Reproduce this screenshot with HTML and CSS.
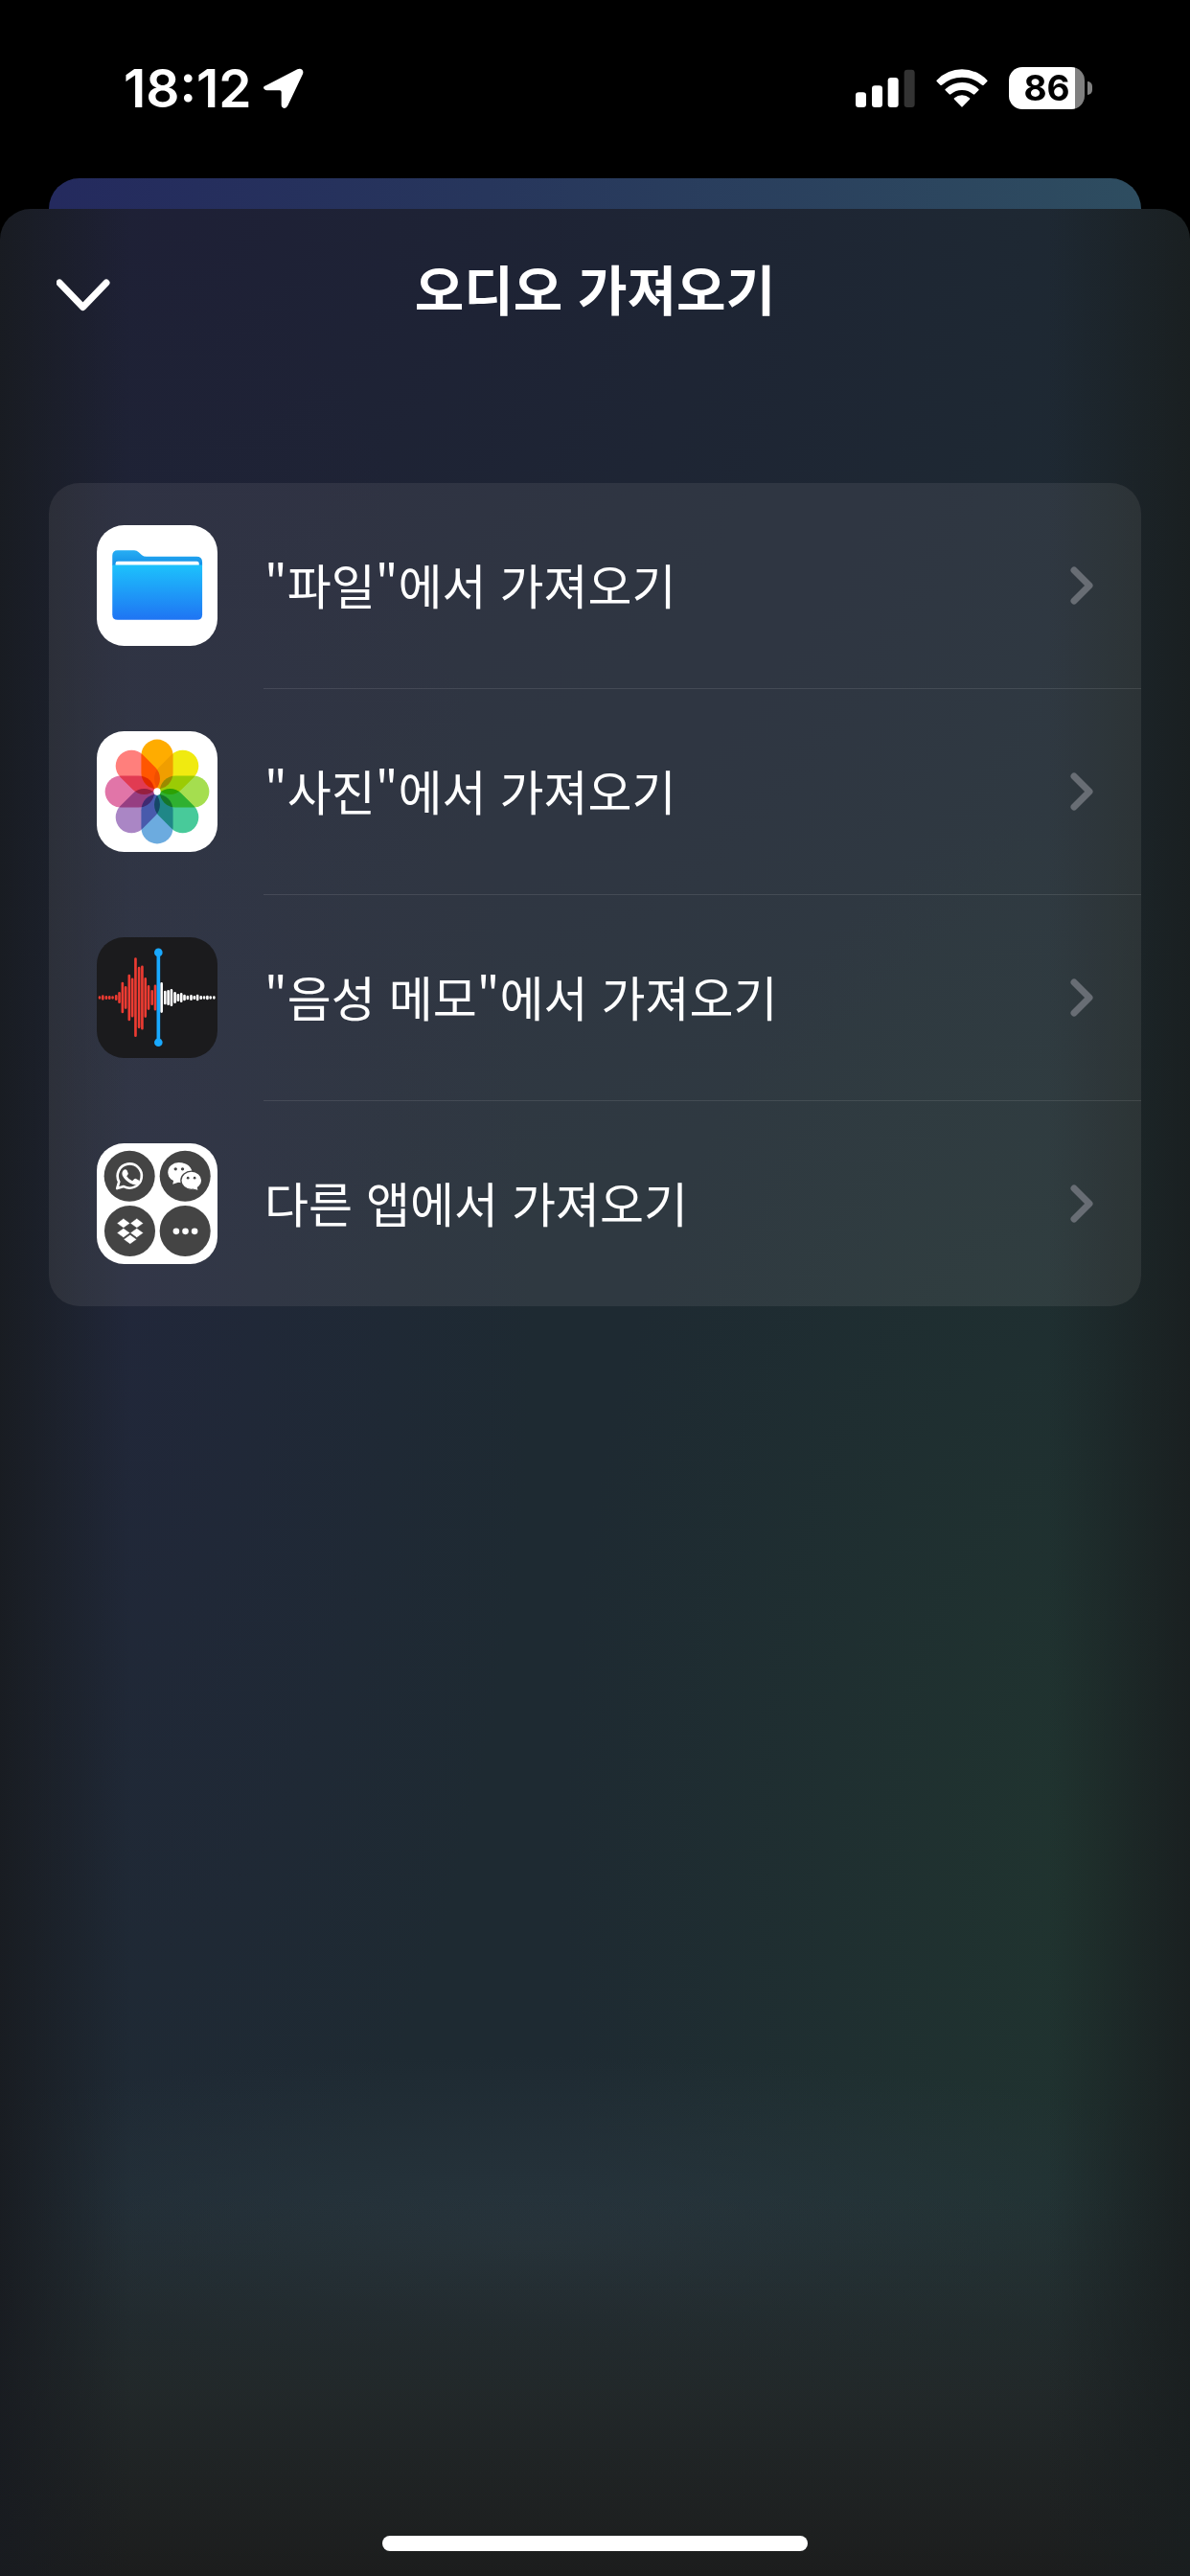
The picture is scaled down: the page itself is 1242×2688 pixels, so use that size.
FILE: index.html
```html
<!DOCTYPE html>
<html lang="ko">
<head>
<meta charset="utf-8">
<meta name="viewport" content="width=device-width, initial-scale=1">
<title>오디오 가져오기</title>
<link rel="stylesheet" href="styles.css">
</head>
<body>
<div class="screen">
  <div class="status-bar">
    <div class="status-left">
      <span class="clock">18:12</span>
      <svg class="location" viewBox="525 95 126 126" aria-hidden="true"><path d="M534 149 631 99Q640 95 646 100Q651 105 648 114L601 213Q597 221 590 221Q581 220 581 210V170Q581 165 576 165H536Q526 164 525 156Q525 152 534 149Z" fill="#fff"/></svg>
    </div>
    <div class="status-right">
      <svg class="signal" viewBox="93 95 186 120" aria-hidden="true">
        <g fill="#fff"><rect x="93" y="168" width="33" height="47" rx="10"/><rect x="144" y="147" width="33" height="68" rx="10"/><rect x="194" y="122" width="33" height="93" rx="10"/></g>
        <rect x="245" y="97" width="33" height="118" rx="10" fill="#333"/>
      </svg>
      <svg class="wifi" viewBox="346 95 162 120" aria-hidden="true">
        <g fill="#fff"><path d="M348 130Q382 96 427 96Q472 96 506 130Q508 132 506 134L495 145Q492 147 490 145Q463 121 427 121Q391 121 364 145Q362 147 359 145L348 134Q346 132 348 130Z"/><path d="M375 158Q398 137 427 137Q456 137 479 158Q481 160 479 162L467 174Q465 176 462 174Q447 161 427 161Q407 161 392 174Q389 176 387 174L375 162Q373 160 375 158Z"/><path d="M403 186Q414 177 427 177Q440 177 451 186Q453 188 451 190L429 213Q427 215 425 213L403 190Q401 188 403 186Z"/></g>
      </svg>
      <div class="battery"><span class="battery-body">86</span><span class="battery-nub"></span></div>
    </div>
  </div>

  <div class="back-sheet"></div>

  <main class="sheet">
    <header class="sheet-header">
      <button class="close" type="button" aria-label="닫기">
        <svg viewBox="0 0 56 34" aria-hidden="true"><path d="M3 4 27.500 29.500 52 4" fill="none" stroke="#fff" stroke-width="7" stroke-linecap="round" stroke-linejoin="round"/></svg>
      </button>
      <h1 class="title">오디오 가져오기</h1>
    </header>

    <ul class="list">
      <li><a class="row" href="#files">
        <svg class="app-icon" viewBox="33 57 380 380" aria-hidden="true">
          <defs>
            <linearGradient id="folder-front" x1="0" y1="0" x2="0" y2="1"><stop offset="0" stop-color="#1dc2fc"/><stop offset="1" stop-color="#1f74f3"/></linearGradient>
            <linearGradient id="folder-back" x1="0" y1="0" x2="0" y2="1"><stop offset="0" stop-color="#27aef4"/><stop offset="1" stop-color="#1590e6"/></linearGradient>
          </defs>
          <rect x="33" y="57" width="380" height="380" rx="86" fill="#fff"/>
          <path d="M82 184V153Q82 136 99 136H151Q159 136 165 142L175 151Q181 156 189 156H347Q365 156 365 174V184Z" fill="url(#folder-back)"/>
          <path d="M92 184V178Q92 171 99 171H348Q355 171 355 178V184Z" fill="#fff"/>
          <path d="M82 182H365V338Q365 355 348 355H99Q82 355 82 338Z" fill="url(#folder-front)"/>
        </svg>
        <span class="label">"파일"에서 가져오기</span>
        <svg class="chevron" viewBox="0 0 24 40" aria-hidden="true"><path d="M4 4 20 20 4 36"/></svg>
      </a></li>
      <li><a class="row" href="#photos">
        <svg class="app-icon" viewBox="-190 -190 380 380" aria-hidden="true">
          <rect x="-190" y="-190" width="380" height="380" rx="86" fill="#fff"/>
          <g class="petals">
            <rect x="-50" y="-164" width="100" height="156" rx="50" fill="#ffac00"/>
            <rect x="-50" y="-164" width="100" height="156" rx="50" fill="#f0ea10" transform="rotate(45)"/>
            <rect x="-50" y="-164" width="100" height="156" rx="50" fill="#a5de4f" transform="rotate(90)"/>
            <rect x="-50" y="-164" width="100" height="156" rx="50" fill="#48ca9a" transform="rotate(135)"/>
            <rect x="-50" y="-164" width="100" height="156" rx="50" fill="#6cabdf" transform="rotate(180)"/>
            <rect x="-50" y="-164" width="100" height="156" rx="50" fill="#aa86c5" transform="rotate(225)"/>
            <rect x="-50" y="-164" width="100" height="156" rx="50" fill="#e175a8" transform="rotate(270)"/>
            <rect x="-50" y="-164" width="100" height="156" rx="50" fill="#ff7f7c" transform="rotate(315)"/>
          </g>
          <circle r="11" fill="#fff"/>
        </svg>
        <span class="label">"사진"에서 가져오기</span>
        <svg class="chevron" viewBox="0 0 24 40" aria-hidden="true"><path d="M4 4 20 20 4 36"/></svg>
      </a></li>
      <li><a class="row" href="#voice-memos">
        <svg class="app-icon" viewBox="34 39 380 380" aria-hidden="true">
          <rect x="34" y="39" width="380" height="380" rx="86" fill="#1b1b1d"/>
          <g fill="none" stroke-width="8" stroke-linecap="round">
            <path stroke="#ec3b32" d="M43 228v2M53 225v8M64 227v4M74 227v4M84 228v2M95 224v10M105 215v28M115 184v90M125 197v64M136 160v138M146 171v116M156 107v242M167 136v186M177 132v194M187 170v118M197 194v70M208 209v40M218 192v74"/>
            <path stroke="#fff" d="M238 185v88M249 211v36M259 209v40M269 206v46M280 215v28M290 221v16M300 218v22M310 223v12M320 226v6M331 224v10M341 227v4M351 223v12M362 227v4M372 228v2M382 226v6M392 228v2M403 228v2"/>
          </g>
          <path d="M228 87V370" stroke="#19a9ff" stroke-width="11"/>
          <circle cx="228" cy="87" r="13" fill="#19a9ff"/><circle cx="228" cy="370" r="13" fill="#19a9ff"/>
        </svg>
        <span class="label">"음성 메모"에서 가져오기</span>
        <svg class="chevron" viewBox="0 0 24 40" aria-hidden="true"><path d="M4 4 20 20 4 36"/></svg>
      </a></li>
      <li><a class="row" href="#other-apps">
        <svg class="app-icon" viewBox="33 37 380 380" aria-hidden="true">
          <rect x="33" y="37" width="380" height="380" rx="86" fill="#fff"/>
          <g fill="#444"><circle cx="136" cy="140" r="80"/><circle cx="311" cy="140" r="80"/><circle cx="137" cy="313" r="80"/><circle cx="311" cy="313" r="80"/></g>
          <path d="M97 179 103 158A38 38 0 1 1 118 173Z" fill="none" stroke="#fff" stroke-width="8" stroke-linejoin="round"/>
          <path d="M118 121Q124 117 128 122L132 132Q132 135 127 140Q134 151 145 155L151 149Q154 147 158 149L166 154Q168 162 160 166Q151 170 137 162Q121 153 114 139Q110 129 118 121Z" fill="#fff"/>
          <path d="M272 166 275 152A34 31 0 1 1 290 160Z" fill="#fff"/>
          <ellipse cx="291" cy="128" rx="34" ry="31" fill="#fff"/>
          <circle cx="281" cy="118" r="5" fill="#444"/><circle cx="303" cy="118" r="5" fill="#444"/>
          <g stroke="#444" stroke-width="4"><ellipse cx="331" cy="154" rx="33" ry="29" fill="#fff"/></g>
          <path d="M336 180 351 184 348 172Z" fill="#fff"/>
          <circle cx="320" cy="146" r="4" fill="#444"/><circle cx="341" cy="146" r="4" fill="#444"/>
          <path transform="translate(96 266) scale(3.500 4)" fill="#fff" stroke="#444" stroke-width=".5" d="M6 1.807 0 5.629l6 3.822 6-3.822zM18 1.807l-6 3.822 6 3.822 6-3.822zM0 13.274l6 3.822 6-3.822-6-3.822zM18 9.452l-6 3.822 6 3.822 6-3.822zM6 18.371l6 3.822 6-3.822-6-3.822z"/>
          <g fill="#fff"><circle cx="283" cy="314" r="10"/><circle cx="312" cy="314" r="10"/><circle cx="341" cy="314" r="10"/></g>
        </svg>
        <span class="label">다른 앱에서 가져오기</span>
        <svg class="chevron" viewBox="0 0 24 40" aria-hidden="true"><path d="M4 4 20 20 4 36"/></svg>
      </a></li>
    </ul>

    <div class="home-indicator"></div>
  </main>
</div>
</body>
</html>
```
FILE: styles.css
```css
* { box-sizing: border-box; }

body {
  margin: 0;
  background: #000;
  color: #fff;
  font-family: Inter, "Noto Sans CJK KR", sans-serif;
}

svg { display: block; flex: none; }

.screen {
  display: flex;
  flex-direction: column;
  min-height: 100vh;
}

/* Status bar */
.status-bar {
  display: flex;
  justify-content: space-between;
  align-items: center;
  height: 186px;
  padding: 0 102px 2px 129px;
}

.status-left,
.status-right {
  display: flex;
  align-items: center;
}

.status-left { gap: 12px; }
.status-right { gap: 22px; }

.clock {
  font-size: 55px;
  font-weight: 600;
  line-height: 64px;
}

.location { width: 42px; height: 42px; }
.signal { width: 62px; height: 40px; }
.wifi { width: 54px; height: 40px; }

.battery {
  display: flex;
  align-items: center;
  gap: 3px;
}

.battery-body {
  width: 79px;
  height: 44px;
  border-radius: 14px;
  background: linear-gradient(90deg, #fff 69px, #808080 69px);
  color: #000;
  font-size: 37px;
  font-weight: 700;
  line-height: 44px;
  text-align: center;
}

.battery-nub {
  width: 5px;
  height: 14px;
  border-radius: 0 6px 6px 0;
  background: #808080;
}

/* Sheets */
.back-sheet {
  height: 32px;
  margin: 0 51px;
  border-radius: 32px 32px 0 0;
  background: linear-gradient(90deg, #242a5e, #27365c 40%, #2e4d60);
}

.sheet {
  flex: 1;
  display: flex;
  flex-direction: column;
  border-radius: 32px 32px 0 0;
  background:
    linear-gradient(90deg, rgba(24, 27, 32, .9), rgba(24, 27, 34, 0) 11%, rgba(25, 28, 30, 0) 88%, rgba(25, 30, 31, .9)),
    linear-gradient(180deg, rgba(28, 29, 29, 0) 84%, rgba(34, 40, 41, .9) 92%, #1c1d1d),
    radial-gradient(ellipse 70% 8% at 45% 86%, rgba(44, 58, 66, .7), rgba(44, 58, 66, 0)),
    radial-gradient(ellipse 45% 45% at 92% 70%, #20342f, rgba(32, 52, 47, 0)),
    radial-gradient(ellipse 90% 45% at 15% 0%, #1e2036, rgba(30, 32, 54, 0)),
    radial-gradient(ellipse 35% 45% at 10% 45%, #21273a, rgba(33, 39, 58, 0)),
    #1e2a32;
}

.sheet-header {
  display: grid;
  grid-template-columns: 1fr auto 1fr;
  align-items: center;
  height: 170px;
  padding: 0 55px;
}

.close {
  justify-self: start;
  padding: 10px 4px 0;
  border: 0;
  background: none;
}

.close svg { width: 56px; height: 34px; }

.title {
  margin: 0;
  padding-bottom: 6px;
  font-family: "Noto Sans CJK KR", sans-serif;
  font-size: 56px;
  font-weight: 700;
  line-height: 80px;
}

/* Source list */
.list {
  margin: 116px 51px 80px;
  padding: 0;
  list-style: none;
  border-radius: 32px;
  background: rgba(255, 245, 240, .08);
}

.row {
  display: flex;
  align-items: center;
  height: 214px;
  padding: 0 50px;
  color: inherit;
  text-decoration: none;
}

.list li + li::before {
  content: "";
  display: block;
  height: 1px;
  margin-left: 224px;
  background: rgba(255, 255, 255, .1);
}

.app-icon { width: 126px; height: 126px; }
.petals { isolation: isolate; }
.petals rect { mix-blend-mode: multiply; }

.label {
  flex: 1;
  margin-left: 49px;
  padding-bottom: 4px;
  font-family: "Noto Sans CJK KR", sans-serif;
  font-size: 50px;
  font-weight: 400;
  line-height: 72px;
}

.chevron {
  width: 24px;
  height: 40px;
  fill: none;
  stroke: #686d74;
  stroke-width: 7;
  stroke-linecap: round;
  stroke-linejoin: round;
}

.home-indicator {
  width: 444px;
  max-width: 60%;
  height: 16px;
  margin: auto auto 26px;
  border-radius: 8px;
  background: #fff;
}
```
